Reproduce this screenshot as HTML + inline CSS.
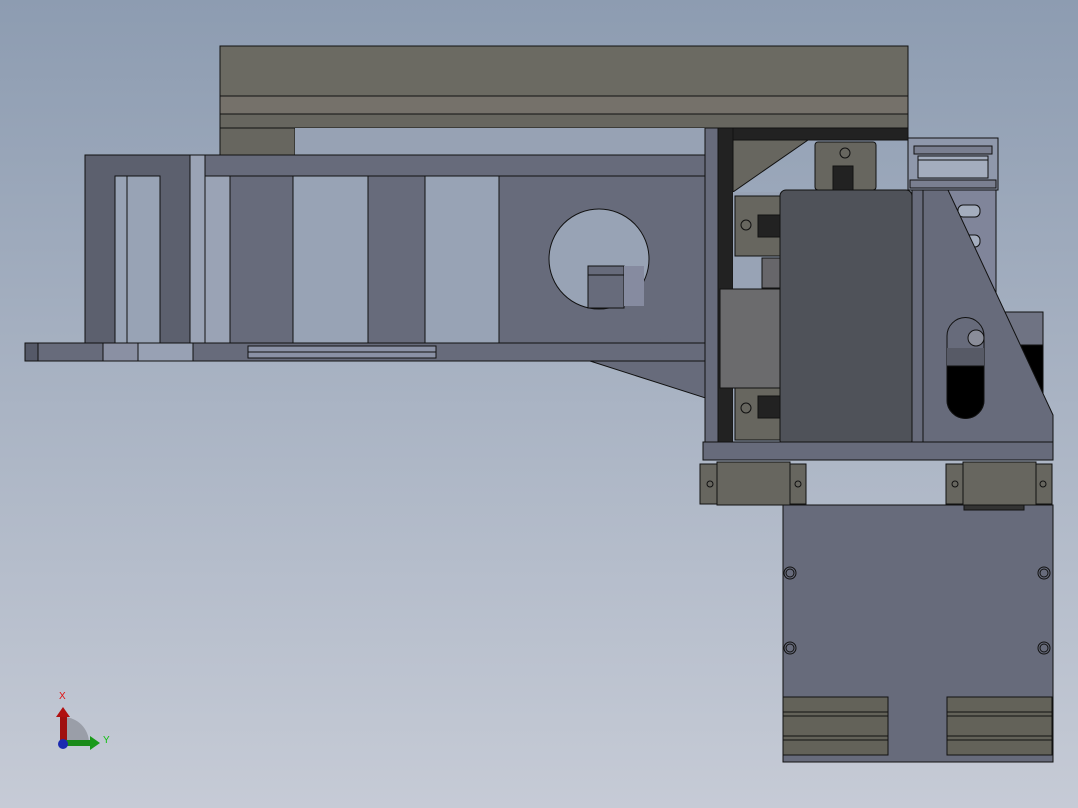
<!DOCTYPE html>
<html><head><meta charset="utf-8"><style>
html,body{margin:0;padding:0;}
body{width:1078px;height:808px;overflow:hidden;background:linear-gradient(#8d9cb1,#c6cbd6);}
svg{position:absolute;left:0;top:0}
</style></head><body>
<svg width="1078" height="808" viewBox="0 0 1078 808" stroke="#111" stroke-width="1">
<!-- top beam -->
<rect x="220" y="46" width="688" height="50" fill="#6b6a62"/>
<rect x="220" y="96" width="688" height="18" fill="#75716a"/>
<rect x="220" y="114" width="688" height="14" fill="#67665f"/>
<rect x="220" y="128" width="75" height="27" fill="#67665f"/>
<rect x="295" y="128" width="421" height="27" fill="#97a2b4" stroke="none"/>
<!-- chain top right -->
<rect x="908" y="138" width="90" height="52" fill="#8f98ab"/>
<rect x="914" y="146" width="78" height="8" fill="#7a7f90"/>
<rect x="918" y="156" width="70" height="22" fill="#a4adbe"/>
<line x1="918" y1="160" x2="988" y2="160"/>
<rect x="910" y="180" width="86" height="8" fill="#7a7f90"/>
<rect x="926" y="190" width="70" height="110" fill="#80859a"/>
<rect x="958" y="205" width="22" height="12" rx="5" fill="#a4adbe"/>
<rect x="958" y="235" width="22" height="12" rx="5" fill="#a4adbe"/>
<rect x="1003" y="312" width="40" height="70" fill="#6f7383"/>
<rect x="1003" y="345" width="40" height="70" fill="#000"/>
<!-- dark bar -->
<rect x="716" y="128" width="192" height="12" fill="#222"/>
<polygon points="733,140 808,140 733,192" fill="#67665f"/>
<!-- top rail block -->
<rect x="815" y="142" width="61" height="48" rx="3" fill="#67665f"/>
<circle cx="845" cy="153" r="5" fill="#67665f"/>
<path d="M833,166 h20 v24 h-20 z" fill="#222"/>
<!-- main arm plate -->
<rect x="190" y="155" width="528" height="188" fill="#676b7b"/>
<rect x="205" y="176" width="25" height="167" fill="#9aa3b5"/>
<rect x="293" y="176" width="75" height="167" fill="#98a3b5"/>
<rect x="425" y="176" width="74" height="167" fill="#98a3b5"/>
<line x1="190" y1="176" x2="718" y2="176"/>
<ellipse cx="599" cy="259" rx="50" ry="50" fill="#98a3b5"/>
<rect x="588" y="266" width="36" height="42" fill="#676b7b"/>
<line x1="588" y1="275" x2="624" y2="275"/>
<rect x="624" y="266" width="20" height="40" fill="#868ba0" stroke="none"/>
<polygon points="718,305 655,343 718,343" fill="#676b7b" stroke="none"/>
<!-- left bracket -->
<rect x="85" y="155" width="105" height="188" fill="#5c606e"/>
<rect x="115" y="176" width="45" height="167" fill="#98a3b5"/>
<line x1="127" y1="176" x2="127" y2="343"/>
<rect x="190" y="155" width="15" height="188" fill="#9aa3b5"/>
<!-- bottom rail -->
<rect x="25" y="343" width="693" height="18" fill="#676b7b"/>
<rect x="25" y="343" width="13" height="18" fill="#555968"/>
<rect x="103" y="343" width="35" height="18" fill="#8a90a3"/>
<rect x="138" y="343" width="55" height="18" fill="#98a1b4"/>
<rect x="248" y="346" width="188" height="12" fill="#8a91a5"/>
<line x1="248" y1="352" x2="436" y2="352"/>
<polygon points="590,361 718,361 718,402" fill="#676b7b"/>
<!-- vertical plates -->
<rect x="705" y="128" width="13" height="314" fill="#676b7b"/>
<rect x="718" y="128" width="15" height="314" fill="#222"/>
<rect x="733" y="192" width="47" height="250" fill="#98a3b5" stroke="none"/>
<!-- rail blocks -->
<rect x="735" y="196" width="45" height="60" fill="#67665f"/>
<circle cx="746" cy="225" r="5" fill="#67665f"/>
<path d="M758,215 h22 v22 h-22 z" fill="#222"/>
<rect x="735" y="387" width="45" height="53" fill="#67665f"/>
<circle cx="746" cy="408" r="5" fill="#67665f"/>
<path d="M758,396 h22 v22 h-22 z" fill="#222"/>
<rect x="762" y="258" width="18" height="30" fill="#67666a"/>
<rect x="720" y="289" width="60" height="99" fill="#6b6b6d"/>
<!-- big motor block -->
<rect x="780" y="190" width="132" height="256" rx="6" fill="#4f5259"/>
<rect x="912" y="190" width="11" height="252" fill="#676b7b"/>
<polygon points="923,190 948,190 1053,415 1053,442 923,442" fill="#676b7b"/>
<path d="M947,336 a18,18 0 0 1 37,0 v64 a18,18 0 0 1 -37,0 z" fill="#676b7b"/>
<rect x="947" y="348" width="37" height="18" fill="#575a66" stroke="none"/>
<path d="M947,366 h37 v34 a18,18 0 0 1 -37,0 z" fill="#000"/>
<circle cx="976" cy="338" r="8" fill="#8a8d99"/>
<!-- base plate -->
<rect x="703" y="442" width="350" height="18" fill="#676b7b"/>
<!-- bottom plate -->
<rect x="783" y="505" width="270" height="257" fill="#676b7b"/>
<!-- bearing blocks -->
<rect x="700" y="464" width="106" height="40" fill="#67665f"/>
<rect x="717" y="462" width="73" height="43" fill="#67665f"/>
<circle cx="710" cy="484" r="3" fill="none"/><circle cx="798" cy="484" r="3" fill="none"/>
<rect x="946" y="464" width="106" height="40" fill="#67665f"/>
<rect x="963" y="462" width="73" height="43" fill="#67665f"/>
<circle cx="955" cy="484" r="3" fill="none"/><circle cx="1043" cy="484" r="3" fill="none"/>
<rect x="964" y="505" width="60" height="5" fill="#333"/>
<!-- holes -->
<g fill="none"><circle cx="790" cy="573" r="6"/><circle cx="790" cy="573" r="4"/>
<circle cx="1044" cy="573" r="6"/><circle cx="1044" cy="573" r="4"/>
<circle cx="790" cy="648" r="6"/><circle cx="790" cy="648" r="4"/>
<circle cx="1044" cy="648" r="6"/><circle cx="1044" cy="648" r="4"/></g>
<!-- bottom rails -->
<g fill="#636259">
<rect x="783" y="697" width="105" height="58"/>
<rect x="947" y="697" width="105" height="58"/></g>
<g><line x1="783" y1="712" x2="888" y2="712"/><line x1="783" y1="716" x2="888" y2="716"/>
<line x1="783" y1="736" x2="888" y2="736"/><line x1="783" y1="740" x2="888" y2="740"/>
<line x1="947" y1="712" x2="1052" y2="712"/><line x1="947" y1="716" x2="1052" y2="716"/>
<line x1="947" y1="736" x2="1052" y2="736"/><line x1="947" y1="740" x2="1052" y2="740"/></g>
<!-- axis triad -->
<g stroke="none">
<path d="M63,743 V717 A26,26 0 0 1 89,743 Z" fill="#9a9ea8"/>
<rect x="60" y="715" width="7" height="28" fill="#a01010"/>
<polygon points="56,717 63,707 70,717" fill="#b01010"/>
<rect x="63" y="740" width="28" height="6" fill="#1a8a1a"/>
<polygon points="90,736 100,743 90,750" fill="#1a9a1a"/>
<circle cx="63" cy="744" r="5" fill="#1a2ab0"/>
<text x="59" y="699" font-family="Liberation Sans, sans-serif" font-size="10" fill="#e01010">X</text>
<text x="103" y="743" font-family="Liberation Sans, sans-serif" font-size="10" fill="#10c010">Y</text>
</g>
</svg>
</body></html>
